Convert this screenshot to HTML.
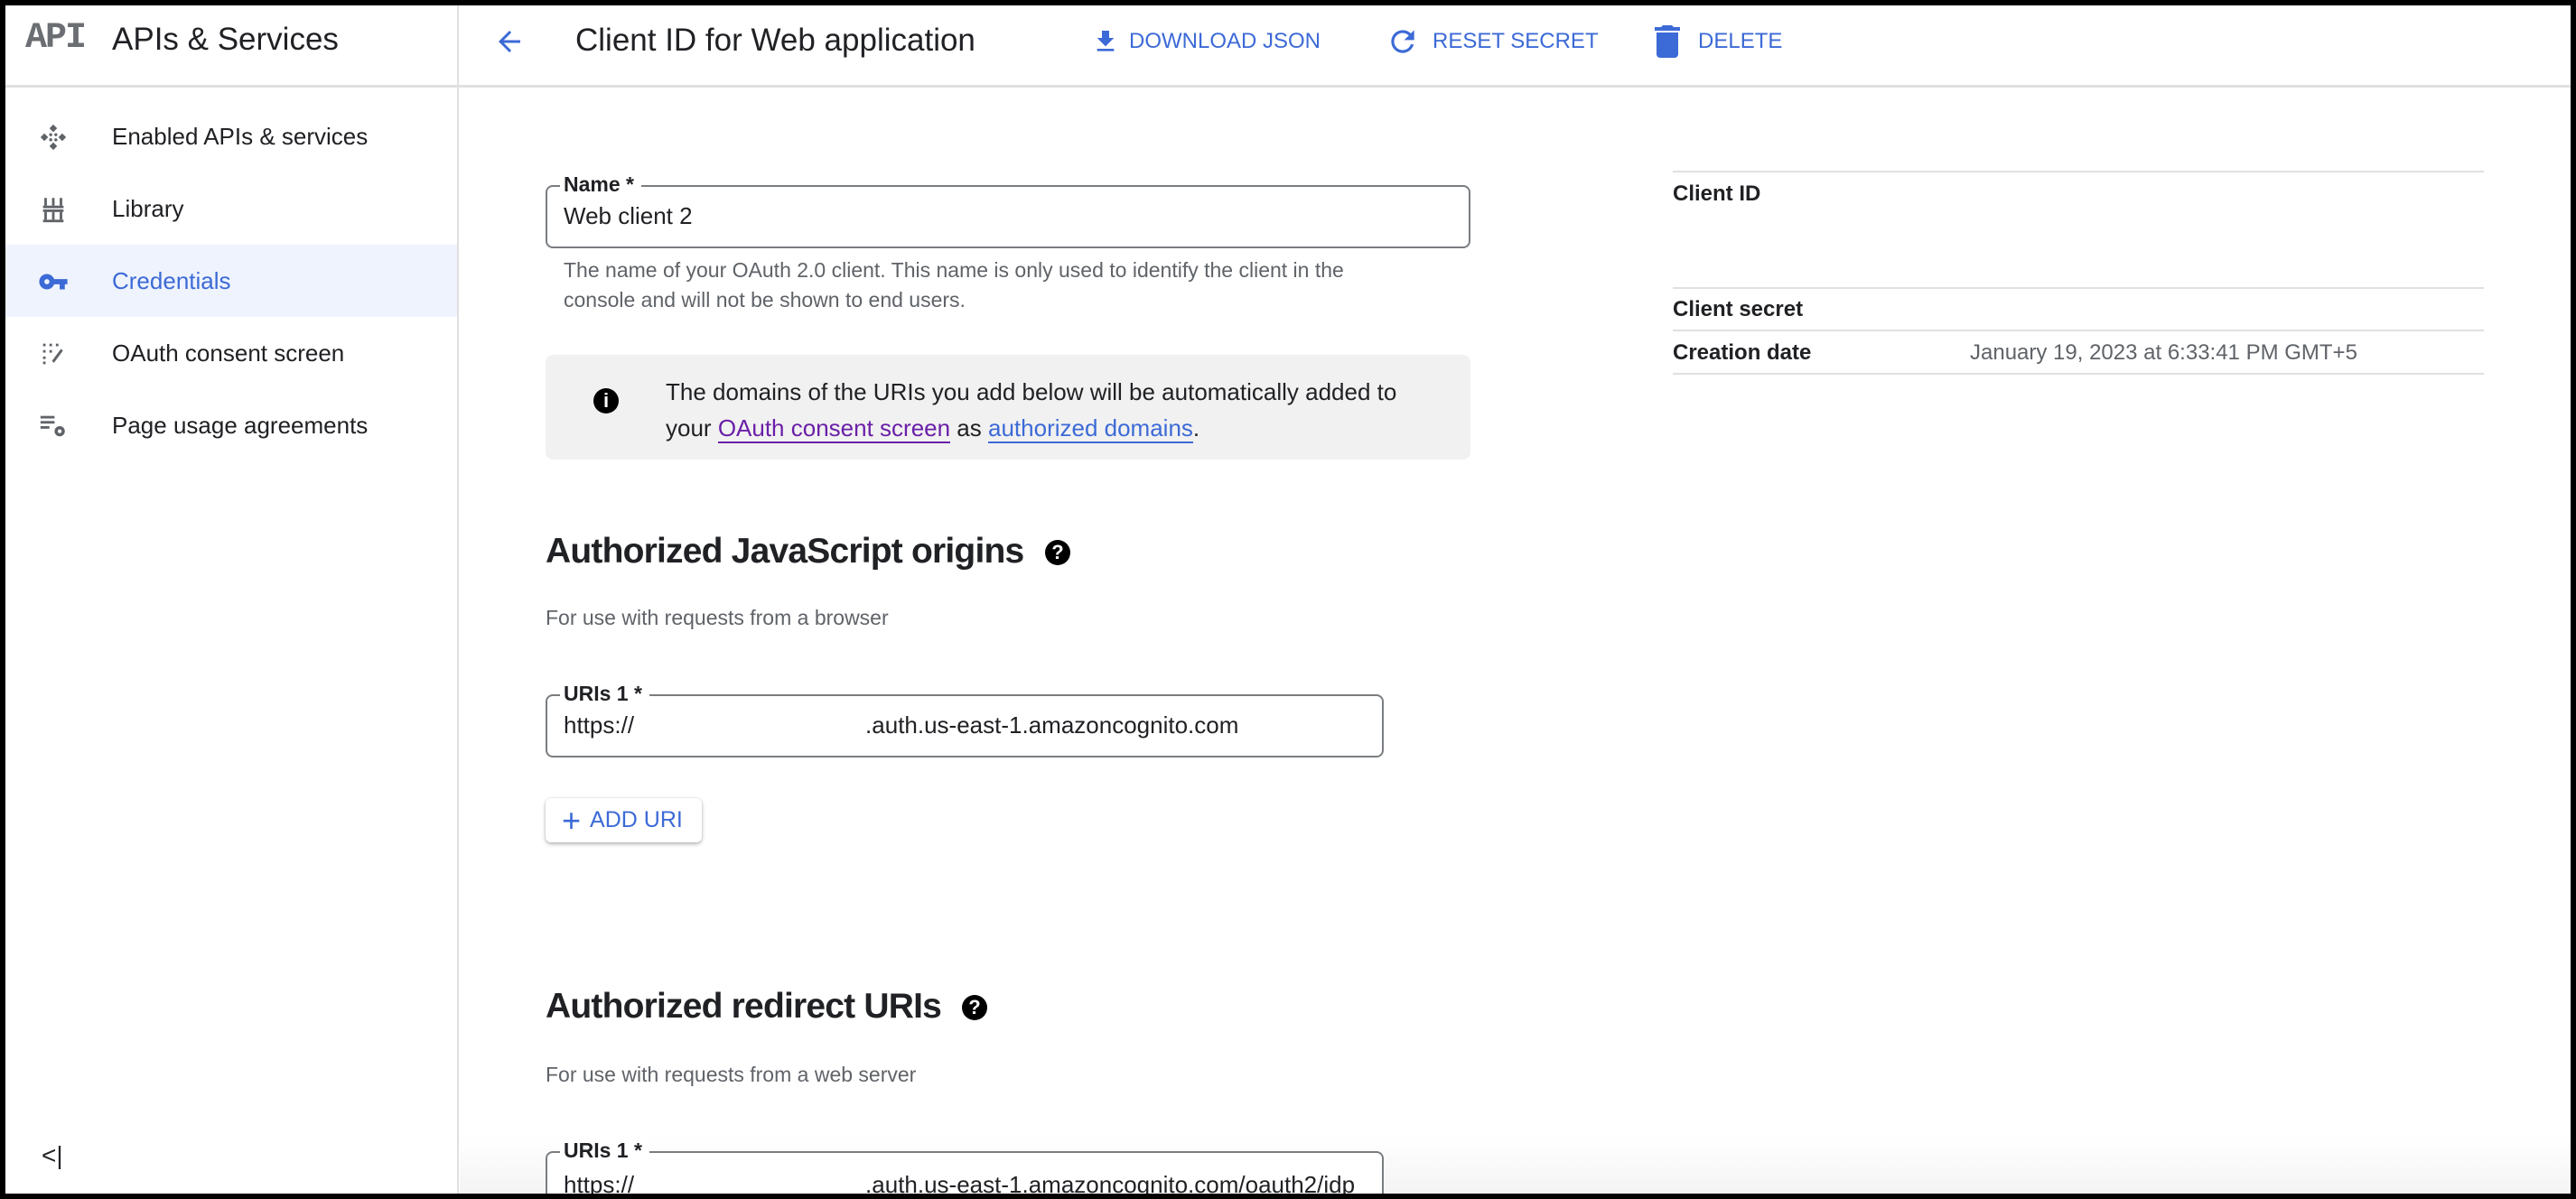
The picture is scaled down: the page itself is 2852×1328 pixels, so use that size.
<!DOCTYPE html>
<html><head><meta charset="utf-8"><style>
*{box-sizing:border-box;margin:0;padding:0}
html,body{width:2852px;height:1328px;overflow:hidden}
body{background:#fff;font-family:"Liberation Sans",Arial,sans-serif;color:#202124;position:relative}
.frame{position:absolute;inset:0;border:6px solid #000;z-index:50;pointer-events:none}
.abs{position:absolute;white-space:nowrap}
.hline{position:absolute;height:3px;background:#e0e0e0}
.nav{position:absolute;left:0;width:507px;height:80px;display:flex;align-items:center;font-size:26px}
.nav .ic{position:absolute;left:42px;top:24px;width:34px;height:34px}
.nav span{position:absolute;left:124px}
.blue{color:#3c6ad6}
.btn{position:absolute;top:28px;height:36px;font-size:24px;color:#3c6ad6;display:flex;align-items:center}
.field{position:absolute;border:2px solid #7a7d80;border-radius:8px}
.flabel{position:absolute;top:-16px;left:14px;background:#fff;padding:0 8px 0 4px;font-size:23px;font-weight:bold;line-height:26px}
.fval{position:absolute;left:18px;font-size:26px}
.help{font-size:23px;color:#5f6368}
.h2{font-size:39px;font-weight:bold;letter-spacing:-.8px}
.circ{position:absolute;width:28px;height:28px;border-radius:50%;background:#000;color:#fff;font-weight:bold;font-size:22px;text-align:center;line-height:28px}
</style></head><body>
<div class="frame"></div>

<div class="abs" style="left:28px;top:20px;font-family:'Liberation Mono',monospace;font-size:40px;font-weight:bold;color:#6b6e72;letter-spacing:-2px">API</div>
<div class="abs" style="left:124px;top:24px;font-size:35px">APIs &amp; Services</div>
<div class="hline" style="left:0;top:94px;width:2852px"></div>
<svg class="abs" style="left:546px;top:28px" width="36" height="36" viewBox="0 0 24 24"><path d="M20 11H7.8l5.6-5.6L12 4l-8 8 8 8 1.4-1.4L7.8 13H20z" fill="#3c6ad6"/></svg>
<div class="abs" style="left:637px;top:25px;font-size:35px">Client ID for Web application</div>
<div class="btn" style="left:1208px"><svg width="32" height="36" viewBox="0 0 24 24"><path d="M19 9h-4V3H9v6H5l7 7 7-7zM5 18v2h14v-2z" fill="#3c6ad6"/></svg><span style="margin-left:10px">DOWNLOAD JSON</span></div>
<div class="btn" style="left:1534px"><svg width="38" height="38" viewBox="0 0 24 24"><path d="M17.65 6.35A7.958 7.958 0 0 0 12 4a8 8 0 1 0 7.73 10h-2.08A6 6 0 1 1 12 6c1.66 0 3.14.69 4.22 1.78L13 11h7V4z" fill="#3c6ad6"/></svg><span style="margin-left:14px">RESET SECRET</span></div>
<div class="btn" style="left:1828px;top:24px;height:44px"><svg width="36" height="44" viewBox="3 2 18 20"><path d="M6 19c0 1.1.9 2 2 2h8c1.1 0 2-.9 2-2V7H6zM19 4h-3.5l-1-1h-5l-1 1H5v2h14z" fill="#3c6ad6"/></svg><span style="margin-left:16px">DELETE</span></div>

<div class="nav" style="top:111px"><svg class="ic" viewBox="0 0 24 24"><g fill="#5f6368"><path d="M12 2l3 3-3 3-3-3z"/><path d="M12 16l3 3-3 3-3-3z"/><path d="M2 12l3-3 3 3-3 3z"/><path d="M16 12l3-3 3 3-3 3z"/><circle cx="10" cy="10" r="1.2"/><circle cx="14" cy="10" r="1.2"/><circle cx="10" cy="14" r="1.2"/><circle cx="14" cy="14" r="1.2"/></g></svg><span>Enabled APIs &amp; services</span></div>
<div class="nav" style="top:191px"><svg class="ic" viewBox="0 0 24 24"><g fill="#5f6368"><rect x="5" y="3" width="2" height="6"/><rect x="11" y="3" width="2" height="6"/><rect x="17" y="3" width="2" height="6"/><rect x="4" y="9" width="16" height="2"/><rect x="4" y="12" width="16" height="2"/><rect x="5" y="14" width="2" height="6"/><rect x="11" y="14" width="2" height="6"/><rect x="17" y="14" width="2" height="6"/><rect x="4" y="20" width="16" height="2"/></g></svg><span>Library</span></div>
<div class="nav" style="top:271px;background:#eef3fd"><div style="position:absolute;left:0;top:0;width:5px;height:80px;background:#3c6ad6"></div><svg class="ic" viewBox="0 0 24 24"><path d="M12.65 10A6 6 0 1 0 12.65 14H17v4h4v-4h2v-4zM7 14a2 2 0 1 1 0-4 2 2 0 0 1 0 4z" fill="#3c6ad6"/></svg><span class="blue">Credentials</span></div>
<div class="nav" style="top:351px"><svg class="ic" viewBox="0 0 24 24"><g fill="#5f6368"><rect x="4" y="4" width="2" height="2"/><rect x="9" y="4" width="2" height="2"/><rect x="14" y="4" width="2" height="2"/><rect x="4" y="9" width="2" height="2"/><rect x="9" y="9" width="2" height="2"/><rect x="4" y="14" width="2" height="2"/><rect x="4" y="18" width="2" height="2"/><path d="M18 8l1.5 1.5-7 9.5-1.5-1.5z"/></g></svg><span>OAuth consent screen</span></div>
<div class="nav" style="top:431px"><svg class="ic" viewBox="0 0 24 24"><g fill="#5f6368"><rect x="2" y="4" width="11" height="2"/><rect x="2" y="8" width="11" height="2"/><rect x="2" y="12" width="7" height="2"/><circle cx="17" cy="16" r="4"/><circle cx="17" cy="16" r="1.5" fill="#fff"/></g></svg><span>Page usage agreements</span></div>
<div class="abs" style="left:46px;top:1264px;font-size:28px;color:#202124">&lt;|</div>

<div class="field" style="left:604px;top:205px;width:1024px;height:70px"><div class="flabel">Name *</div><div class="fval" style="top:17px">Web client 2</div></div>
<div class="abs help" style="left:624px;top:283px;line-height:33px">The name of your OAuth 2.0 client. This name is only used to identify the client in the<br>console and will not be shown to end users.</div>

<div style="position:absolute;left:604px;top:393px;width:1024px;height:116px;background:#f1f1f1;border-radius:8px"></div>
<div class="circ" style="left:657px;top:430px">i</div>
<div class="abs" style="left:737px;top:414px;font-size:26px;line-height:40px">The domains of the URIs you add below will be automatically added to<br>your <span style="color:#6a1fa8;border-bottom:2px solid #6a1fa8">OAuth consent screen</span> as <span style="color:#3c6ad6;border-bottom:2px solid #3c6ad6">authorized domains</span>.</div>

<div class="abs h2" style="left:604px;top:589px">Authorized JavaScript origins</div>
<div class="circ" style="left:1157px;top:598px">?</div>
<div class="abs help" style="left:604px;top:671px">For use with requests from a browser</div>

<div class="field" style="left:604px;top:769px;width:928px;height:70px"><div class="flabel">URIs 1 *</div><div class="fval" style="top:17px">https://<span style="display:inline-block;width:256px"></span>.auth.us-east-1.amazoncognito.com</div></div>

<div style="position:absolute;left:604px;top:884px;width:173px;height:49px;background:#fff;border-radius:6px;box-shadow:0 2px 4px rgba(0,0,0,.28),0 0 2px rgba(0,0,0,.12);color:#3c6ad6;font-size:25px;display:flex;align-items:center"><span style="font-size:36px;margin-left:18px;margin-right:10px;line-height:30px">+</span>ADD URI</div>

<div class="abs h2" style="left:604px;top:1093px">Authorized redirect URIs</div>
<div class="circ" style="left:1065px;top:1102px">?</div>
<div class="abs help" style="left:604px;top:1177px">For use with requests from a web server</div>

<div style="position:absolute;left:509px;top:1258px;width:2343px;height:70px;background:linear-gradient(#fff,#f3f3f3)"></div>
<div style="position:absolute;left:0;top:1260px;width:2852px;height:68px;overflow:hidden">
<div class="field" style="left:604px;top:15px;width:928px;height:80px;background:#fff"><div class="flabel">URIs 1 *</div><div class="fval" style="top:14px">https://<span style="display:inline-block;width:256px;height:30px;background:#fff"></span>.auth.us-east-1.amazoncognito.com/oauth2/idp</div></div>
</div>
<div style="position:absolute;left:506px;top:0;width:2px;height:1328px;background:#e0e0e0"></div>

<div class="hline" style="left:1852px;top:189px;width:898px;height:2px"></div>
<div class="abs" style="left:1852px;top:201px;font-size:24px;font-weight:bold">Client ID</div>
<div class="hline" style="left:1852px;top:318px;width:898px;height:2px"></div>
<div class="abs" style="left:1852px;top:329px;font-size:24px;font-weight:bold">Client secret</div>
<div class="hline" style="left:1852px;top:365px;width:898px;height:2px"></div>
<div class="abs" style="left:1852px;top:377px;font-size:24px;font-weight:bold">Creation date</div>
<div class="abs" style="left:2181px;top:377px;font-size:24px;color:#5f6368">January 19, 2023 at 6:33:41 PM GMT+5</div>
<div class="hline" style="left:1852px;top:413px;width:898px;height:2px"></div>
</body></html>
